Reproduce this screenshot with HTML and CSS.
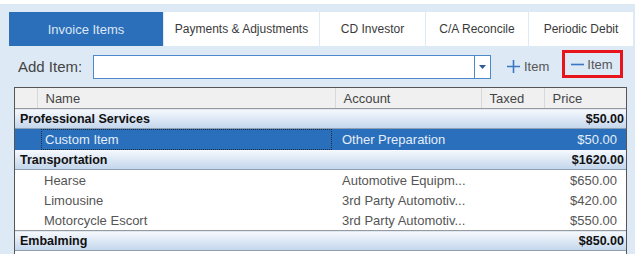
FILE: index.html
```html
<!DOCTYPE html>
<html lang="en">
<head>
    <meta charset="UTF-8">
    <meta name="viewport" content="width=device-width, initial-scale=1.0">
    <title>Invoice Items</title>
    <link rel="stylesheet" href="styles.css">
</head>
<body>
    <div class="panel">
        <div class="tabs">
            <div class="tab active t1">Invoice Items</div>
            <div class="tab t2">Payments &amp; Adjustments</div>
            <div class="tab t3">CD Investor</div>
            <div class="tab t4">C/A Reconcile</div>
            <div class="tab t5">Periodic Debit</div>
        </div>

        <div class="toolbar">
            <span class="add-label">Add Item:</span>
            <div class="combo">
                <div class="combo-field"></div>
                <div class="combo-btn">
                    <svg width="7" height="4" viewBox="0 0 7 4"><path d="M0 0h7L3.5 4z" fill="#2c5d9a"/></svg>
                </div>
            </div>
            <div class="item-btn plus">
                <svg width="15" height="15" viewBox="0 0 15 15"><path d="M7.5 1v13M1 7.5h13" stroke="#3a78c2" stroke-width="1.6"/></svg>
                <span>Item</span>
            </div>
            <div class="item-btn minus">
                <svg width="13" height="15" viewBox="0 0 13 15"><path d="M0 7.5h13" stroke="#3a78c2" stroke-width="1.6"/></svg>
                <span>Item</span>
            </div>
        </div>

        <div class="grid">
            <table>
                <colgroup>
                    <col class="c-ind">
                    <col class="c-name">
                    <col class="c-acct">
                    <col class="c-tax">
                    <col class="c-price">
                </colgroup>
                <thead>
                    <tr>
                        <th></th>
                        <th>Name</th>
                        <th>Account</th>
                        <th>Taxed</th>
                        <th>Price</th>
                    </tr>
                </thead>
                <tbody>
                    <tr class="group">
                        <td colspan="4">Professional Services</td>
                        <td class="amt">$50.00</td>
                    </tr>
                    <tr class="item selected">
                        <td></td>
                        <td><div class="focus">Custom Item</div></td>
                        <td>Other Preparation</td>
                        <td></td>
                        <td class="amt">$50.00</td>
                    </tr>
                    <tr class="group">
                        <td colspan="4">Transportation</td>
                        <td class="amt">$1620.00</td>
                    </tr>
                    <tr class="item">
                        <td></td>
                        <td>Hearse</td>
                        <td>Automotive Equipm...</td>
                        <td></td>
                        <td class="amt">$650.00</td>
                    </tr>
                    <tr class="item">
                        <td></td>
                        <td>Limousine</td>
                        <td>3rd Party Automotiv...</td>
                        <td></td>
                        <td class="amt">$420.00</td>
                    </tr>
                    <tr class="item last">
                        <td></td>
                        <td>Motorcycle Escort</td>
                        <td>3rd Party Automotiv...</td>
                        <td></td>
                        <td class="amt">$550.00</td>
                    </tr>
                    <tr class="group">
                        <td colspan="4">Embalming</td>
                        <td class="amt">$850.00</td>
                    </tr>
                    <tr class="item">
                        <td></td>
                        <td>&nbsp;</td>
                        <td></td>
                        <td></td>
                        <td class="amt"></td>
                    </tr>
                </tbody>
            </table>
        </div>
    </div>
</body>
</html>
```

FILE: styles.css
```css
body {
    margin: 0;
    background: #ffffff;
    font-family: "Liberation Sans", Arial, sans-serif;
    font-size: 12px;
    color: #333;
    overflow: hidden;
}

.panel {
    margin-top: 4px;
    height: 250px;
    overflow: hidden;
    background: #dde9f5;
    padding: 8px 0 0 9px;
    box-sizing: border-box;
}

/* tabs */
.tabs {
    display: flex;
    gap: 1px;
    height: 34px;
}

.tab {
    display: flex;
    align-items: center;
    justify-content: center;
    background: #ffffff;
    color: #3a3a3a;
    font-size: 12px;
}

.tab.active {
    background: #2b6fbb;
    color: #dce7f3;
    font-size: 13px;
}

.t1 { width: 154px; }
.t2 { width: 155px; }
.t3 { width: 105px; }
.t4 { width: 102px; }
.t5 { width: 104px; }

/* add item row */
.toolbar {
    display: flex;
    align-items: center;
    height: 41px;
}

.add-label {
    font-size: 15px;
    color: #444;
    margin-left: 9px;
    width: 75px;
}

.combo {
    display: flex;
    width: 398px;
    height: 24px;
    border: 1px solid #4d88c9;
    box-sizing: border-box;
    background: #fff;
}

.combo-field {
    flex: 1;
}

.combo-btn {
    width: 15px;
    border-left: 1px solid #4d88c9;
    display: flex;
    align-items: center;
    justify-content: center;
}

.item-btn {
    display: flex;
    align-items: center;
    gap: 3px;
    color: #555;
    font-size: 13px;
}

.item-btn.plus {
    margin-left: 15px;
}

.item-btn.minus {
    margin-left: 13px;
    margin-bottom: 5px;
    border: 3px solid #e8141c;
    height: 28px;
    box-sizing: border-box;
    padding: 0 7px 0 6px;
}

/* grid */
.grid {
    margin-left: 5px;
    width: 613px;
    border: 1px solid #555;
    border-bottom: none;
    background: #fff;
    box-sizing: border-box;
}

table {
    width: 100%;
    border-collapse: collapse;
    table-layout: fixed;
}

.c-ind { width: 22px; }
.c-name { width: 298px; }
.c-acct { width: 146px; }
.c-tax { width: 63px; }
.c-price { width: 82px; }

th {
    height: 20px;
    background: #f0f0f0;
    border-right: 1px solid #d8d8d8;
    border-bottom: 1px solid #9a9a9a;
    font-weight: normal;
    text-align: left;
    color: #444;
    font-size: 13px;
    padding: 0 0 0 8px;
}

th:last-child {
    border-right: none;
}

td {
    height: 20px;
    padding: 0 0 0 7px;
    white-space: nowrap;
    overflow: hidden;
    color: #555;
    font-size: 13px;
}

.group td {
    height: 19px;
    background: linear-gradient(#f6f9fd, #c3d6ec);
    border-bottom: 1px solid #8f9fb3;
    font-weight: bold;
    color: #111;
    font-size: 12.5px;
    padding-left: 5px;
}

.group td.amt {
    padding-right: 2px;
}

.amt {
    text-align: right;
    padding-right: 9px;
}

.selected td {
    background: #2a6fbb;
    color: #e4eef9;
    height: 21px;
}

.selected td:nth-child(2) {
    padding-left: 4px;
}

.focus {
    border: 1px dotted #1c2a3a;
    height: 19px;
    line-height: 19px;
    padding-left: 3px;
    margin-right: 3px;
}

.item.last td {
    border-bottom: 1px solid #999;
}
```
